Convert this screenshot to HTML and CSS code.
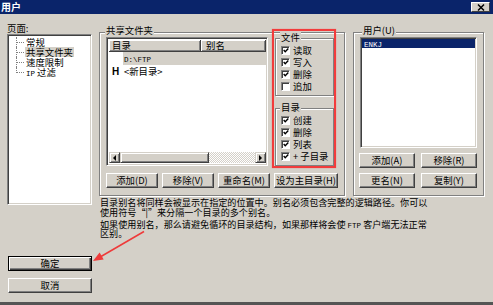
FILE: index.html
```html
<!DOCTYPE html>
<html lang="zh-CN">
<head>
    <meta charset="UTF-8">
    <title>用户</title>
    <link rel="stylesheet" href="styles.css">
</head>
<body>
<div class="window">
    <div class="titlebar">
        <span class="title">用户</span>
        <span class="close">
            <svg width="8" height="7" viewBox="0 0 8 7"><path d="M1 0.5 L7 6.5 M7 0.5 L1 6.5" stroke="#000" stroke-width="1.5"/></svg>
        </span>
    </div>

    <div class="dialog">
        <!-- columna izquierda: arbol de paginas -->
        <div class="side">
            <div class="side-label">页面:</div>
            <div class="tree">
                <div class="tree-item"><span class="tree-text">常规</span></div>
                <div class="tree-item"><span class="tree-text selected">共享文件夹</span></div>
                <div class="tree-item"><span class="tree-text">速度限制</span></div>
                <div class="tree-item"><span class="tree-text"><span class="latin">IP</span> 过滤</span></div>
            </div>
            <button class="btn btn-side btn-default">确定</button>
            <button class="btn btn-side btn-cancel">取消</button>
        </div>

        <div class="main">
            <div class="groups">
                <div class="group group-share">
                    <div class="group-title">共享文件夹</div>
                    <div class="share-row">
                        <div class="listview">
                            <div class="lv-header">
                                <span class="lv-col col-dir">目录</span>
                                <span class="lv-col col-alias">别名</span>
                            </div>
                            <div class="lv-body">
                                <div class="lv-row">
                                    <span class="lv-mark"></span>
                                    <span class="lv-path selected"><span class="mono">D:\FTP</span></span>
                                </div>
                                <div class="lv-row">
                                    <span class="lv-mark">H</span>
                                    <span class="lv-path">&lt;新目录&gt;</span>
                                </div>
                            </div>
                            <div class="hscroll">
                                <span class="sb-btn"><span class="tri tri-left"></span></span>
                                <span class="sb-thumb"></span>
                                <span class="sb-track"></span>
                                <span class="sb-btn"><span class="tri tri-right"></span></span>
                            </div>
                        </div>

                        <div class="perms">
                            <div class="group perm-group">
                                <div class="group-title small">文件</div>
                                <div class="check"><span class="cb"><svg width="7" height="7" viewBox="0 0 7 7"><path d="M0.8 3 L2.6 5 L6.2 1.2" fill="none" stroke="#000" stroke-width="1.6"/></svg></span><span class="check-text">读取</span></div>
                                <div class="check"><span class="cb"><svg width="7" height="7" viewBox="0 0 7 7"><path d="M0.8 3 L2.6 5 L6.2 1.2" fill="none" stroke="#000" stroke-width="1.6"/></svg></span><span class="check-text">写入</span></div>
                                <div class="check"><span class="cb"><svg width="7" height="7" viewBox="0 0 7 7"><path d="M0.8 3 L2.6 5 L6.2 1.2" fill="none" stroke="#000" stroke-width="1.6"/></svg></span><span class="check-text">删除</span></div>
                                <div class="check"><span class="cb"></span><span class="check-text">追加</span></div>
                            </div>
                            <div class="group perm-group perm-dir">
                                <div class="group-title small">目录</div>
                                <div class="check"><span class="cb"><svg width="7" height="7" viewBox="0 0 7 7"><path d="M0.8 3 L2.6 5 L6.2 1.2" fill="none" stroke="#000" stroke-width="1.6"/></svg></span><span class="check-text">创建</span></div>
                                <div class="check"><span class="cb"><svg width="7" height="7" viewBox="0 0 7 7"><path d="M0.8 3 L2.6 5 L6.2 1.2" fill="none" stroke="#000" stroke-width="1.6"/></svg></span><span class="check-text">删除</span></div>
                                <div class="check"><span class="cb"><svg width="7" height="7" viewBox="0 0 7 7"><path d="M0.8 3 L2.6 5 L6.2 1.2" fill="none" stroke="#000" stroke-width="1.6"/></svg></span><span class="check-text">列表</span></div>
                                <div class="check"><span class="cb"><svg width="7" height="7" viewBox="0 0 7 7"><path d="M0.8 3 L2.6 5 L6.2 1.2" fill="none" stroke="#000" stroke-width="1.6"/></svg></span><span class="check-text">+ 子目录</span></div>
                            </div>
                        </div>
                    </div>
                    <div class="btn-row">
                        <button class="btn btn-sm">添加(D)</button>
                        <button class="btn btn-sm">移除(V)</button>
                        <button class="btn btn-sm">重命名(M)</button>
                        <button class="btn btn-wide">设为主目录(H)</button>
                    </div>
                </div>

                <div class="group group-users">
                    <div class="group-title">用户(U)</div>
                    <div class="userlist">
                        <div class="user-row selected"><span class="mono">ENKJ</span></div>
                    </div>
                    <div class="user-btns">
                        <button class="btn btn-user">添加(A)</button>
                        <button class="btn btn-user">移除(R)</button>
                        <button class="btn btn-user">更名(N)</button>
                        <button class="btn btn-user">复制(Y)</button>
                    </div>
                </div>
            </div>

            <div class="note">
                <div class="note-line">目录别名将同样会被显示在指定的位置中。别名必须包含完整的逻辑路径。你可以</div>
                <div class="note-line">使用符号“|”来分隔一个目录的多个别名。</div>
                <div class="note-line gap">如果使用别名，那么请避免循环的目录结构，如果那样将会使 <span class="mono">FTP</span> 客户端无法正常</div>
                <div class="note-line">区别。</div>
            </div>
        </div>
    </div>

    <!-- anotaciones rojas sobre la captura -->
    <div class="highlight"></div>
    <svg class="arrow" width="493" height="305" viewBox="0 0 493 305">
        <line x1="144" y1="231.5" x2="101" y2="256.5" stroke="#ee3a3a" stroke-width="1.5"/>
        <polygon points="93,261 99.6,252.5 103.7,259.4" fill="#ee3a3a"/>
    </svg>
</div>
</body>
</html>
```

FILE: styles.css
```css
* {
    box-sizing: border-box;
}

body {
    margin: 0;
    font-family: "Noto Sans CJK SC", "Noto Sans", sans-serif;
    font-size: 9.4px;
    color: #000;
    background: #d4d0c8;
}

.window {
    position: relative;
    width: 493px;
    height: 305px;
    background: #d4d0c8;
    border-bottom: 3px solid #555;
    overflow: hidden;
}

.titlebar {
    height: 14px;
    background: #0a246a;
    color: #fff;
    display: flex;
    align-items: center;
    justify-content: space-between;
    padding: 0 3px 0 1px;
}

.title {
    font-weight: bold;
    font-size: 10px;
    line-height: 14px;
}

.close {
    width: 19px;
    height: 10px;
    background: #d4d0c8;
    border: 1px solid;
    border-color: #fff #404040 #404040 #fff;
    display: flex;
    align-items: center;
    justify-content: center;
}

.dialog {
    display: flex;
    padding-left: 7px;
}

/* Columna izquierda */
.side {
    width: 85px;
    display: flex;
    flex-direction: column;
}

.side-label {
    margin-top: 10px;
    height: 9px;
    line-height: 9px;
}

.tree {
    margin-top: 1px;
    height: 171px;
    background: #fff;
    border: 1px solid;
    border-color: #808080 #fff #fff #808080;
    box-shadow: inset 1px 1px #404040, inset -1px -1px #d4d0c8;
    padding: 2px 0 0 8px;
}

    .tree-item {
        height: 10px;
        display: flex;
        align-items: center;
    }

        .tree-item::before {
            content: '';
            width: 8px;
            height: 10px;
            border-left: 1px dotted #808080;
            background-image: linear-gradient(to right, #808080 50%, transparent 50%);
            background-size: 2px 1px;
            background-repeat: repeat-x;
            background-position: 0 5px;
        }

        .tree-item:last-child::before {
            height: 6px;
            align-self: flex-start;
        }

    .tree-text {
        display: block;
        height: 10px;
        line-height: 10px;
        padding: 0 1px;
        white-space: nowrap;
    }

        .tree-text.selected {
            background: #d4d0c8;
        }

.latin,
.mono {
    font-family: "Liberation Mono", "DejaVu Sans Mono", monospace;
    font-size: 7.5px;
}

/* Botones clasicos */
.btn {
    height: 15px;
    padding: 0;
    font: inherit;
    line-height: 13px;
    color: #000;
    background: #d4d0c8;
    border: 1px solid;
    border-color: #fff #404040 #404040 #fff;
    box-shadow: inset -1px -1px #808080;
    white-space: nowrap;
}

.btn-side {
    width: 84px;
    margin-left: 1px;
}

.btn-default {
    margin-top: 51px;
    border-color: #000;
    box-shadow: inset 1px 1px #fff, inset -1px -1px #404040, inset -2px -2px #808080;
}

.btn-cancel {
    margin-top: 7px;
}

/* Area principal */
.main {
    margin-left: 7px;
    width: 385px;
}

.groups {
    display: flex;
    gap: 8px;
    margin-top: 18px;
}

.group {
    border: 1px solid #808080;
    box-shadow: inset 1px 1px #fff, 1px 1px #fff;
}

.group-title {
    width: fit-content;
    height: 10px;
    background: #d4d0c8;
    line-height: 10px;
    padding: 0 1px;
    margin: -8px 0 0 5px;
    white-space: nowrap;
}

    .group-title.small {
        margin: -7px 0 0 4px;
    }

.group-share {
    width: 246px;
    height: 164px;
}

.share-row {
    display: flex;
    gap: 7px;
    height: 131px;
    padding-left: 6px;
}

/* Lista de carpetas */
.listview {
    margin-top: 2px;
    width: 162px;
    height: 129px;
    background: #fff;
    border: 1px solid;
    border-color: #808080 #fff #fff #808080;
    box-shadow: inset 1px 1px #404040, inset -1px -1px #d4d0c8;
    padding: 1px;
    display: flex;
    flex-direction: column;
}

.lv-header {
    display: flex;
    height: 12px;
    margin: 1px 0 0 1px;
}

.lv-col {
    background: #d4d0c8;
    border-right: 1px solid #404040;
    border-bottom: 1px solid #404040;
    box-shadow: inset 1px 1px #fff, inset -1px -1px #808080;
    line-height: 11px;
}

.col-dir {
    width: 92px;
    padding-left: 3px;
}

.col-alias {
    flex: 1;
    padding-left: 5px;
}

.lv-body {
    flex: 1;
    padding-left: 1px;
}

.lv-row {
    display: flex;
    height: 13px;
    align-items: center;
}

.lv-mark {
    width: 14px;
    padding-left: 3px;
    font-family: "Liberation Sans", Arial, sans-serif;
    font-weight: bold;
    font-size: 10px;
}

.lv-path {
    flex: 1;
    height: 13px;
    line-height: 13px;
    padding-left: 1px;
}

    .lv-path.selected {
        background: #d4d0c8;
    }

.hscroll {
    display: flex;
    height: 11px;
    margin-left: 1px;
    margin-bottom: 1px;
}

.sb-btn,
.sb-thumb {
    background: #d4d0c8;
    border: 1px solid;
    border-color: #d4d0c8 #404040 #404040 #d4d0c8;
    box-shadow: inset 1px 1px #fff, inset -1px -1px #808080;
}

.sb-btn {
    width: 11px;
    display: flex;
    align-items: center;
    justify-content: center;
}

.sb-thumb {
    width: 89px;
}

.sb-track {
    flex: 1;
    background-image: conic-gradient(#fff 25%, #d4d0c8 0 50%, #fff 0 75%, #d4d0c8 0);
    background-size: 2px 2px;
}

.tri {
    width: 0;
    height: 0;
    border-top: 3px solid transparent;
    border-bottom: 3px solid transparent;
}

.tri-left {
    border-right: 3px solid #000;
}

.tri-right {
    border-left: 3px solid #000;
}

/* Permisos */
.perms {
    width: 59px;
    margin-top: 3px;
}

.perm-group {
    height: 58px;
}

.perm-dir {
    margin-top: 12px;
}

.check {
    display: flex;
    align-items: center;
    gap: 3px;
    height: 12px;
    padding-left: 5px;
    white-space: nowrap;
}

.check-text {
    display: block;
    height: 10px;
    line-height: 10px;
}

.perm-group .group-title + .check {
    margin-top: 2px;
}

.cb {
    width: 9px;
    height: 9px;
    background: #fff;
    border: 1px solid;
    border-color: #808080 #fff #fff #808080;
    box-shadow: inset 1px 1px #404040;
    display: flex;
    align-items: center;
    justify-content: center;
    padding: 1px 0 0 1px;
}

.btn-row {
    display: flex;
    gap: 4px;
    margin-top: 7px;
    padding-left: 6px;
}

.btn-sm {
    width: 52px;
}

.btn-wide {
    width: 64px;
}

/* Usuarios */
.group-users {
    width: 131px;
    height: 164px;
    padding-left: 5px;
}

    .group-users .group-title {
        margin-left: 3px;
    }

.userlist {
    margin: 2px 0 0 1px;
    width: 117px;
    height: 111px;
    background: #fff;
    border: 1px solid;
    border-color: #808080 #fff #fff #808080;
    box-shadow: inset 1px 1px #404040, inset -1px -1px #d4d0c8;
    padding: 1px;
}

.user-row {
    height: 9px;
    line-height: 9px;
    padding-left: 2px;
}

    .user-row.selected {
        background: #0a246a;
        color: #fff;
    }

.user-btns {
    display: grid;
    grid-template-columns: 56px 56px;
    gap: 5px 6px;
    margin-top: 5px;
}

/* Texto de ayuda */
.note {
    margin: 2px 0 0 1px;
    font-size: 9.1px;
}

.note-line {
    height: 9.5px;
    line-height: 9.5px;
    white-space: nowrap;
}

    .note-line.gap {
        margin-top: 2.5px;
    }

/* Anotaciones */
.highlight {
    position: absolute;
    left: 272px;
    top: 29px;
    width: 64px;
    height: 139px;
    border: 2px solid #f23c3c;
    box-shadow: 0 0 1px rgba(255, 60, 60, 0.6);
}

.arrow {
    position: absolute;
    left: 0;
    top: 0;
    pointer-events: none;
}
```
